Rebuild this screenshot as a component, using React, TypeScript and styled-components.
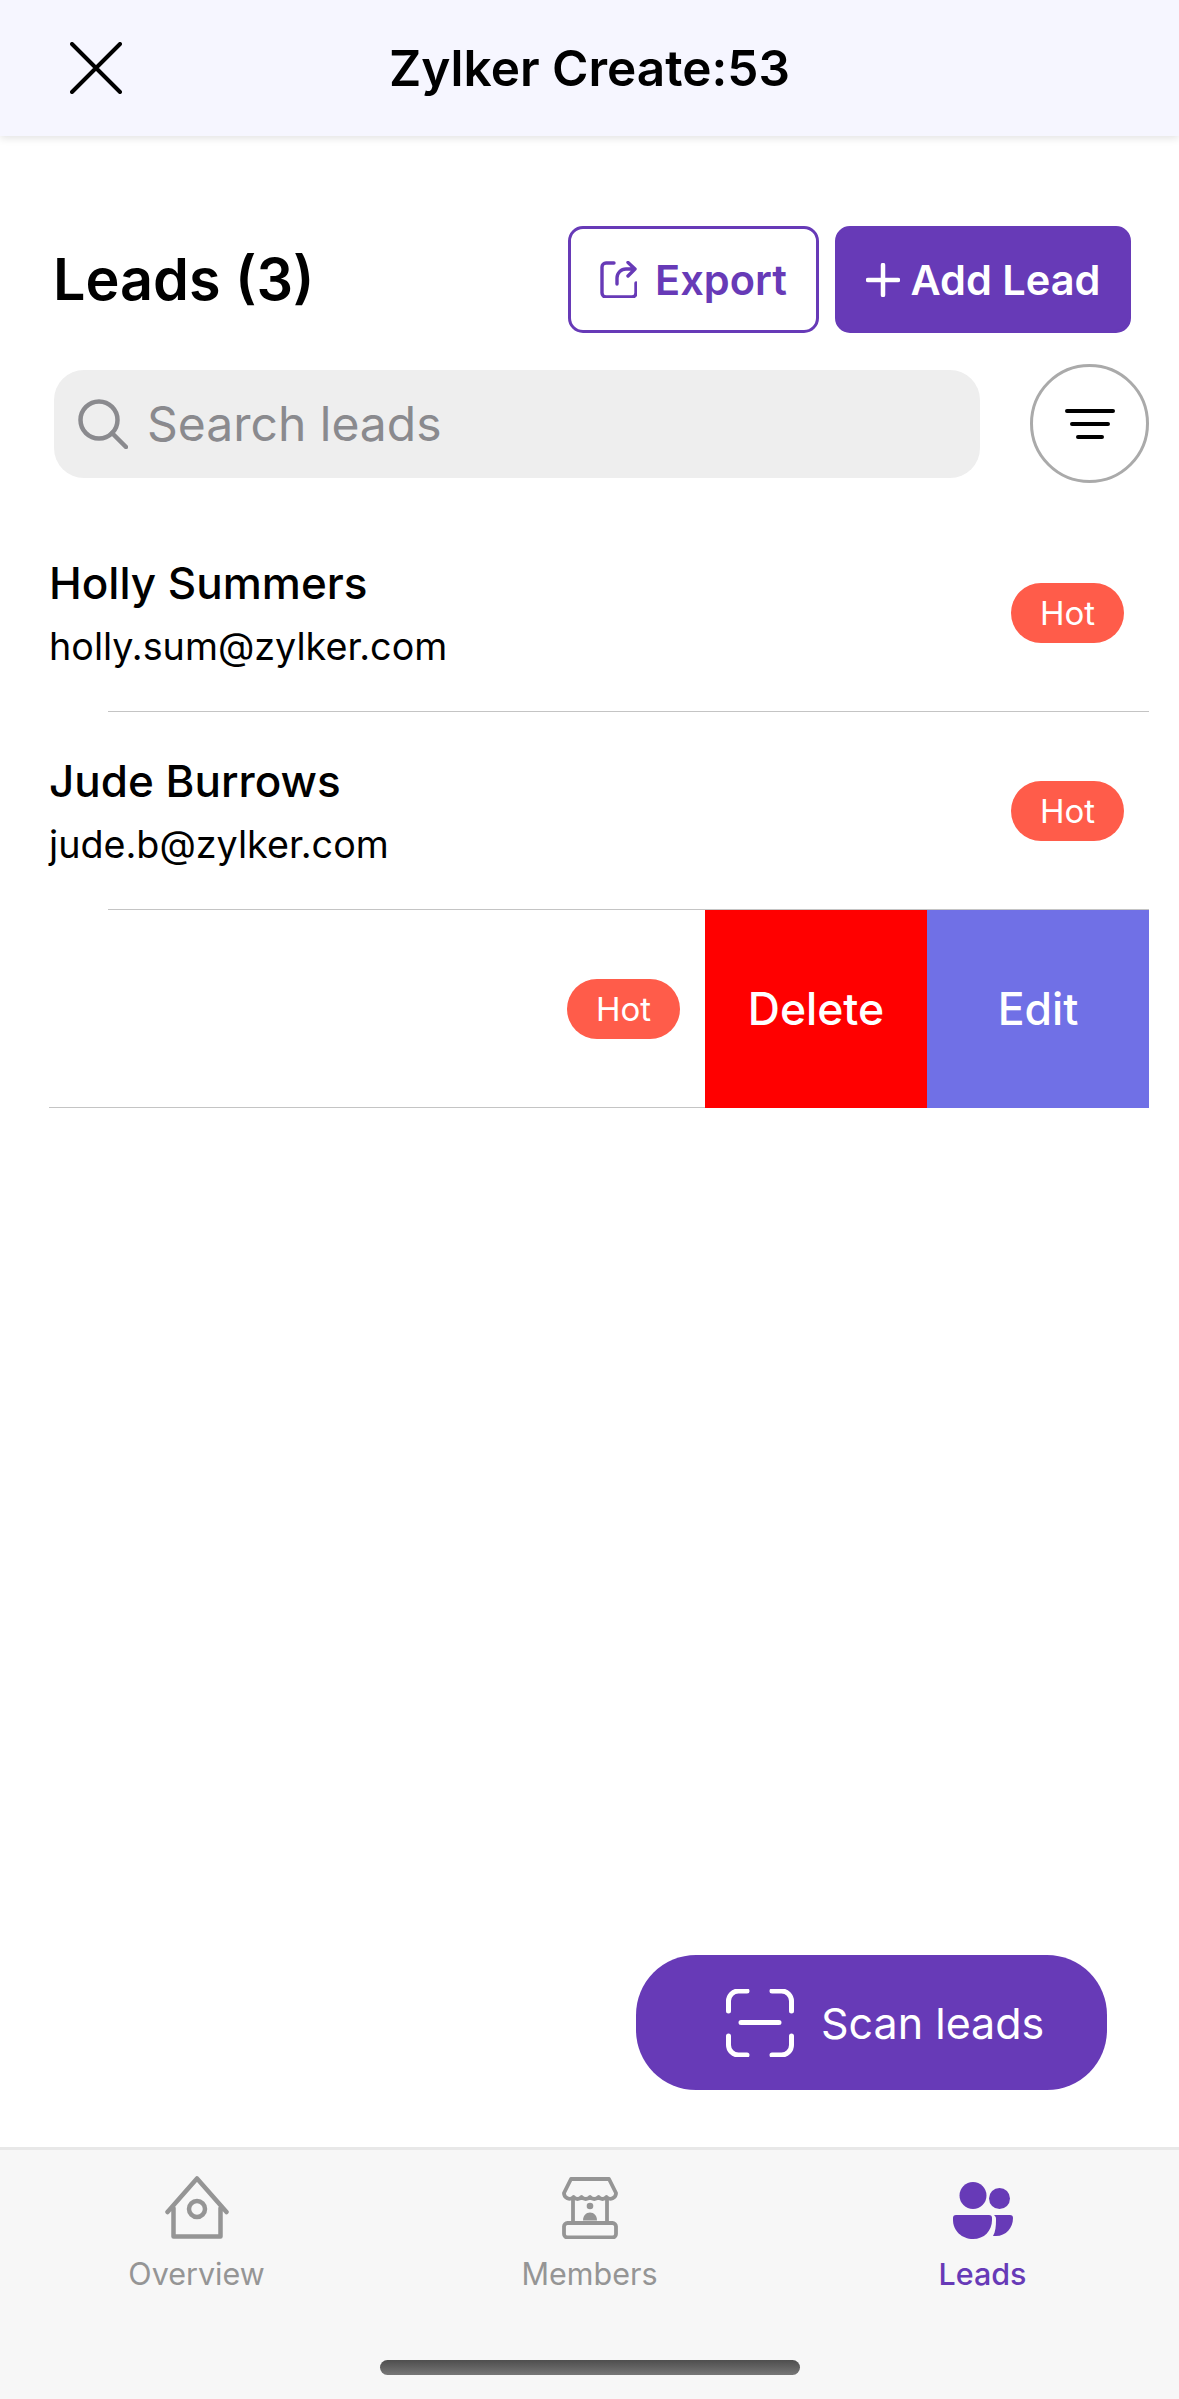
import { createGlobalStyle, styled } from "styled-components";

const Global = createGlobalStyle`
  * { box-sizing: border-box; }
  html, body { margin: 0; padding: 0; background: #fff; }
  body { font-family: Inter, "Liberation Sans", sans-serif; color: #000; }
`;

const Page = styled.div`
  position: relative;
  display: flex;
  flex-direction: column;
  width: 1179px;
  height: 2399px;
  overflow: hidden;
`;

const Header = styled.header`
  display: grid;
  grid-template-columns: 1fr auto 1fr;
  align-items: center;
  height: 136px;
  padding: 0 70px;
  background: #f6f6ff;
  box-shadow: 0 2px 8px rgba(0, 0, 0, 0.12);
`;

const Title = styled.h1`
  margin: 2px 0 0;
  font-size: 49.5px;
  font-weight: 600;
  line-height: 1;
`;

const Main = styled.main`
  flex: 1;
`;

const TopRow = styled.div`
  display: flex;
  align-items: center;
  justify-content: space-between;
  margin-top: 90px;
  padding: 0 48px 0 53px;
`;

const Heading = styled.h2`
  margin: 0 0 2px;
  font-size: 57.5px;
  font-weight: 600;
`;

const Actions = styled.div`
  display: flex;
  gap: 16px;
`;

const ActionButton = styled.div<{ $filled?: boolean }>`
  display: flex;
  align-items: center;
  justify-content: center;
  gap: ${(p) => (p.$filled ? "11px" : "18px")};
  width: ${(p) => (p.$filled ? "296px" : "251px")};
  height: 107px;
  border: 3px solid #673ab7;
  border-radius: 15px;
  background: ${(p) => (p.$filled ? "#673ab7" : "#fff")};
  color: ${(p) => (p.$filled ? "#fff" : "#673ab7")};
  font-size: 41.5px;
  font-weight: 600;
`;

const SearchRow = styled.div`
  display: flex;
  align-items: center;
  gap: 50px;
  margin-top: 31px;
  padding-left: 54px;
`;

const SearchBox = styled.div`
  display: flex;
  align-items: center;
  gap: 19px;
  width: 926px;
  height: 108px;
  padding-left: 24px;
  border-radius: 30px;
  background: #eee;
  color: #8a8a8e;
  font-size: 48px;
`;

const FilterButton = styled.div`
  display: flex;
  align-items: center;
  justify-content: center;
  width: 119px;
  height: 119px;
  border: 3px solid #aaa;
  border-radius: 50%;
`;

const List = styled.div`
  margin: 31px 30px 0 49px;
`;

const Row = styled.div`
  position: relative;
  display: flex;
  align-items: center;
  justify-content: space-between;
  height: 198px;
  padding-right: 25px;

  &::after {
    content: "";
    position: absolute;
    left: 59px;
    right: 0;
    bottom: 0;
    height: 1px;
    background: #c4c4c4;
  }
`;

const Name = styled.div`
  font-size: 44px;
  font-weight: 500;
  line-height: 50px;
`;

const Email = styled.div`
  margin-top: 16px;
  font-size: 37.7px;
  line-height: 44px;
`;

const Badge = styled.span`
  display: flex;
  align-items: center;
  justify-content: center;
  width: 113px;
  height: 60px;
  border-radius: 30px;
  background: #ff5c4a;
  color: #fff;
  font-size: 33px;
`;

const SwipedRow = styled.div`
  display: flex;
  height: 198px;
`;

const SwipedBody = styled.div`
  flex: 1;
  display: flex;
  align-items: center;
  justify-content: flex-end;
  padding-right: 25px;
  border-bottom: 1px solid #c4c4c4;
`;

const SwipeAction = styled.div<{ $color: string }>`
  display: flex;
  align-items: center;
  justify-content: center;
  width: 222px;
  background: ${(p) => p.$color};
  color: #fff;
  font-size: 44.5px;
  font-weight: 500;
`;

const ScanButton = styled.div`
  position: absolute;
  left: 636px;
  top: 1955px;
  display: flex;
  align-items: center;
  gap: 27px;
  width: 471px;
  height: 135px;
  padding-left: 90px;
  border-radius: 60px;
  background: #673ab7;
  color: #fff;
  font-size: 43px;
`;

const TabBar = styled.nav`
  position: relative;
  display: grid;
  grid-template-columns: repeat(3, 1fr);
  height: 252px;
  padding-top: 24px;
  border-top: 3px solid #e8e8e8;
  background: #f7f7f7;
`;

const Tab = styled.div<{ $active?: boolean }>`
  display: flex;
  flex-direction: column;
  align-items: center;
  color: ${(p) => (p.$active ? "#673ab7" : "#959595")};
  font-size: 30.5px;
  font-weight: ${(p) => (p.$active ? 500 : 400)};
`;

const TabIcon = styled.div`
  display: flex;
  align-items: flex-end;
  justify-content: center;
  height: 65px;
  margin-bottom: 16px;
`;

const HomeIndicator = styled.div`
  position: absolute;
  left: 380px;
  bottom: 24px;
  width: 420px;
  height: 15px;
  border-radius: 8px;
  background: linear-gradient(#4e4e4e, #777);
`;

const CloseIcon = () => (
  <svg width="52" height="52" viewBox="0 0 52 52" fill="none" stroke="#000" strokeWidth="4" strokeLinecap="round">
    <path d="M2 2l48 48M50 2L2 50" />
  </svg>
);

const ExportIcon = () => (
  <svg width="37" height="37" viewBox="0 0 37 37" fill="none" stroke="#673ab7" strokeWidth="3.4" strokeLinecap="round" strokeLinejoin="round">
    <path d="M14 2H6a4 4 0 0 0-4 4v26a4 4 0 0 0 4 4h26a4 4 0 0 0 4-4V22" />
    <path d="M17 23v-6a9 9 0 0 1 9-9h9M28 1.500l7 6.500-7 7" />
  </svg>
);

const PlusIcon = () => (
  <svg width="34" height="34" viewBox="0 0 34 34" fill="none" stroke="#fff" strokeWidth="4.500" strokeLinecap="round">
    <path d="M17 2v30M2 17h30" />
  </svg>
);

const SearchIcon = () => (
  <svg width="50" height="50" viewBox="0 0 50 50" fill="none" stroke="#8a8a8e" strokeWidth="4.500" strokeLinecap="round">
    <circle cx="21" cy="21" r="18.500" />
    <path d="M34 34l14 14" />
  </svg>
);

const FilterIcon = () => (
  <svg width="50" height="32" viewBox="0 0 50 32" fill="none" stroke="#000" strokeWidth="4" strokeLinecap="round">
    <path d="M2 3h46M7 16h36M13 29h24" />
  </svg>
);

const ScanIcon = () => (
  <svg width="68" height="68" viewBox="0 0 68 68" fill="none" stroke="#fff" strokeWidth="5" strokeLinecap="round">
    <path d="M2.500 22V12a10 10 0 0 1 10-10H21M46 2h9.500a10 10 0 0 1 10 10v10M2.500 47v9a10 10 0 0 0 10 10H21M46 66h9.500a10 10 0 0 0 10-10v-9M15 33.500h38" />
  </svg>
);

const HouseIcon = () => (
  <svg width="64" height="63" viewBox="0 0 64 63" fill="none" stroke="#959595" strokeWidth="4.500" strokeLinecap="round" strokeLinejoin="round">
    <path d="M2.500 36L32 2.500 61.500 36M8.500 32v28.500h47V32" />
    <circle cx="32" cy="33" r="8" />
  </svg>
);

const BoothIcon = () => (
  <svg width="56" height="62" viewBox="0 0 56 62" fill="none" stroke="#959595" strokeWidth="3.800" strokeLinecap="round" strokeLinejoin="round">
    <path d="M9 2h38l7 14a5.500 5.500 0 0 1-9.500 4 5 5 0 0 1-8 0 5.500 5.500 0 0 1-8.500 0 5.500 5.500 0 0 1-8.500 0 5 5 0 0 1-8 0A5.500 5.500 0 0 1 2 16z" />
    <path d="M11 22v24M45 22v24" />
    <rect x="2" y="46" width="52" height="14.500" rx="3.500" />
    <circle cx="28" cy="29" r="3.300" fill="#959595" stroke="none" />
    <path d="M21 43.500c0-5 3-8 7-8s7 3 7 8z" fill="#959595" stroke="none" />
  </svg>
);

const PeopleIcon = () => (
  <svg width="60" height="57" viewBox="0 0 60 57" fill="#673ab7">
    <ellipse cx="20" cy="13.500" rx="13.500" ry="13.500" />
    <circle cx="46.500" cy="16.500" r="10.500" />
    <path d="M3 33h33a3 3 0 0 1 3 3v2c0 11-8 19-19 19S0 49 0 38v-2a3 3 0 0 1 3-3z" />
    <path d="M41 33h16a3 3 0 0 1 3 3c0 10-7 18-17 18h-3c2.500-4 3-10 3-16 0-2 0-3.500-2-5z" />
  </svg>
);

const leads = [
  { name: "Holly Summers", email: "holly.sum@zylker.com" },
  { name: "Jude Burrows", email: "jude.b@zylker.com" },
];

export default function App() {
  return (
    <Page>
      <Global />
      <Header>
        <CloseIcon />
        <Title>Zylker Create:53</Title>
      </Header>
      <Main>
        <TopRow>
          <Heading>Leads (3)</Heading>
          <Actions>
            <ActionButton>
              <ExportIcon />
              Export
            </ActionButton>
            <ActionButton $filled>
              <PlusIcon />
              Add Lead
            </ActionButton>
          </Actions>
        </TopRow>
        <SearchRow>
          <SearchBox>
            <SearchIcon />
            Search leads
          </SearchBox>
          <FilterButton>
            <FilterIcon />
          </FilterButton>
        </SearchRow>
        <List>
          {leads.map((lead) => (
            <Row key={lead.email}>
              <div>
                <Name>{lead.name}</Name>
                <Email>{lead.email}</Email>
              </div>
              <Badge>Hot</Badge>
            </Row>
          ))}
          <SwipedRow>
            <SwipedBody>
              <Badge>Hot</Badge>
            </SwipedBody>
            <SwipeAction $color="#ff0000">Delete</SwipeAction>
            <SwipeAction $color="#7070e6">Edit</SwipeAction>
          </SwipedRow>
        </List>
      </Main>
      <ScanButton>
        <ScanIcon />
        Scan leads
      </ScanButton>
      <TabBar>
        <Tab>
          <TabIcon><HouseIcon /></TabIcon>
          Overview
        </Tab>
        <Tab>
          <TabIcon><BoothIcon /></TabIcon>
          Members
        </Tab>
        <Tab $active>
          <TabIcon><PeopleIcon /></TabIcon>
          Leads
        </Tab>
        <HomeIndicator />
      </TabBar>
    </Page>
  );
}
